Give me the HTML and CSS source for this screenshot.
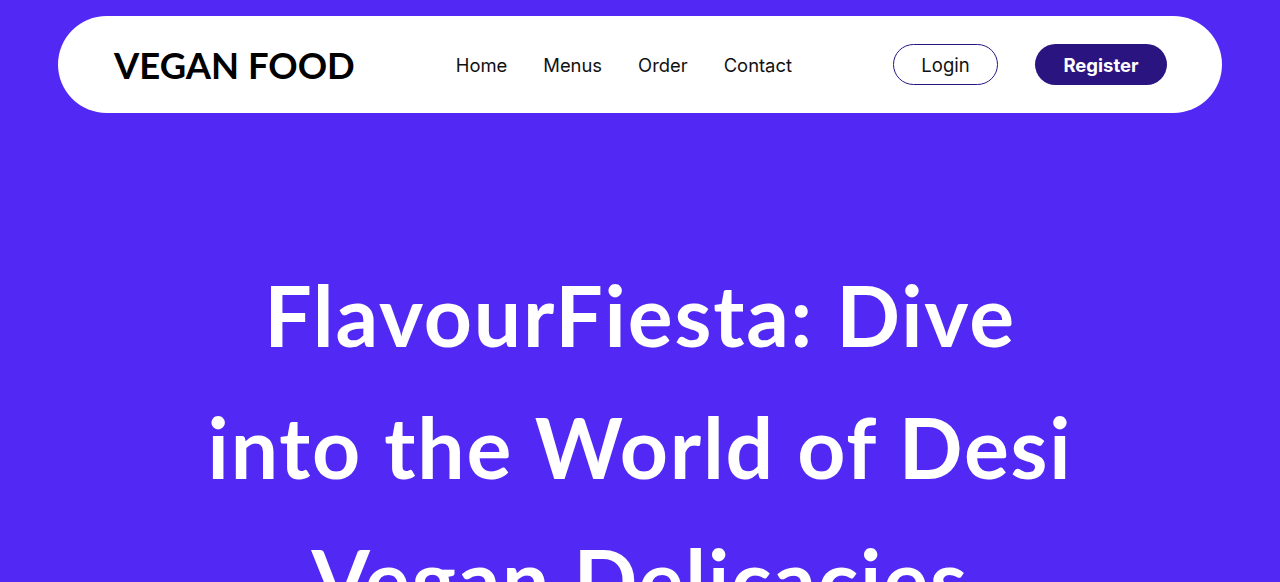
FILE: index.html
```html
<!DOCTYPE html>
<html lang="en">
<head>
    <meta charset="UTF-8">
    <title>Vegan Food</title>
    <link rel="stylesheet" href="styles.css">
</head>
<body>
    <!-- 상단 네비 -->
    <header class="top">
        <nav class="navbar">
            <h1 class="logo">VEGAN FOOD</h1>
            <ul class="gnb">
                <li><a href="#">Home</a></li>
                <li><a href="#">Menus</a></li>
                <li><a href="#">Order</a></li>
                <li><a href="#">Contact</a></li>
            </ul>
            <div class="btns">
                <a href="#" class="btn login">Login</a>
                <a href="#" class="btn register">Register</a>
            </div>
        </nav>
    </header>

    <!-- 메인 타이틀 -->
    <section class="hero">
        <h2 class="tit">FlavourFiesta: Dive<br>into the World of Desi<br>Vegan Delicacies</h2>
    </section>
</body>
</html>
```

FILE: styles.css
```css
*{
    margin: 0;
    padding: 0;
    box-sizing: border-box;
}
body{
    background-color: #5229f4;
    font-family: Inter, "Noto Sans", sans-serif;
    overflow: hidden;
}
a{
    text-decoration: none;
    color: inherit;
}
ul{
    list-style: none;
}

/* 상단 */
.top{
    padding: 16px 58px 0;
}
.navbar{
    display: flex;
    align-items: center;
    height: 97px;
    padding: 0 55px 0 56px;
    background-color: #fff;
    border-radius: 49px;
}
.logo{
    font-family: Lato, sans-serif;
    font-size: 36.4px;
    font-weight: 700;
    color: #000;
}
.gnb{
    display: flex;
    gap: 36px;
    margin-left: 101px;
    font-size: 18.4px;
    color: #111;
}
.btns{
    display: flex;
    gap: 37px;
    margin-left: auto;
}
.btn{
    display: flex;
    align-items: center;
    justify-content: center;
    height: 41px;
    border-radius: 21px;
    font-size: 18.5px;
}
.login{
    width: 105px;
    border: 1px solid #2a1480;
    color: #111;
}
.register{
    width: 132px;
    background-color: #2a1480;
    color: #fff;
    font-weight: 700;
}

/* 메인 타이틀 */
.hero{
    padding-top: 136px;
    text-align: center;
}
.tit{
    font-family: Lato, sans-serif;
    font-size: 84px;
    font-weight: 700;
    line-height: 132px;
    letter-spacing: 1.8px;
    color: #fff;
}
```
